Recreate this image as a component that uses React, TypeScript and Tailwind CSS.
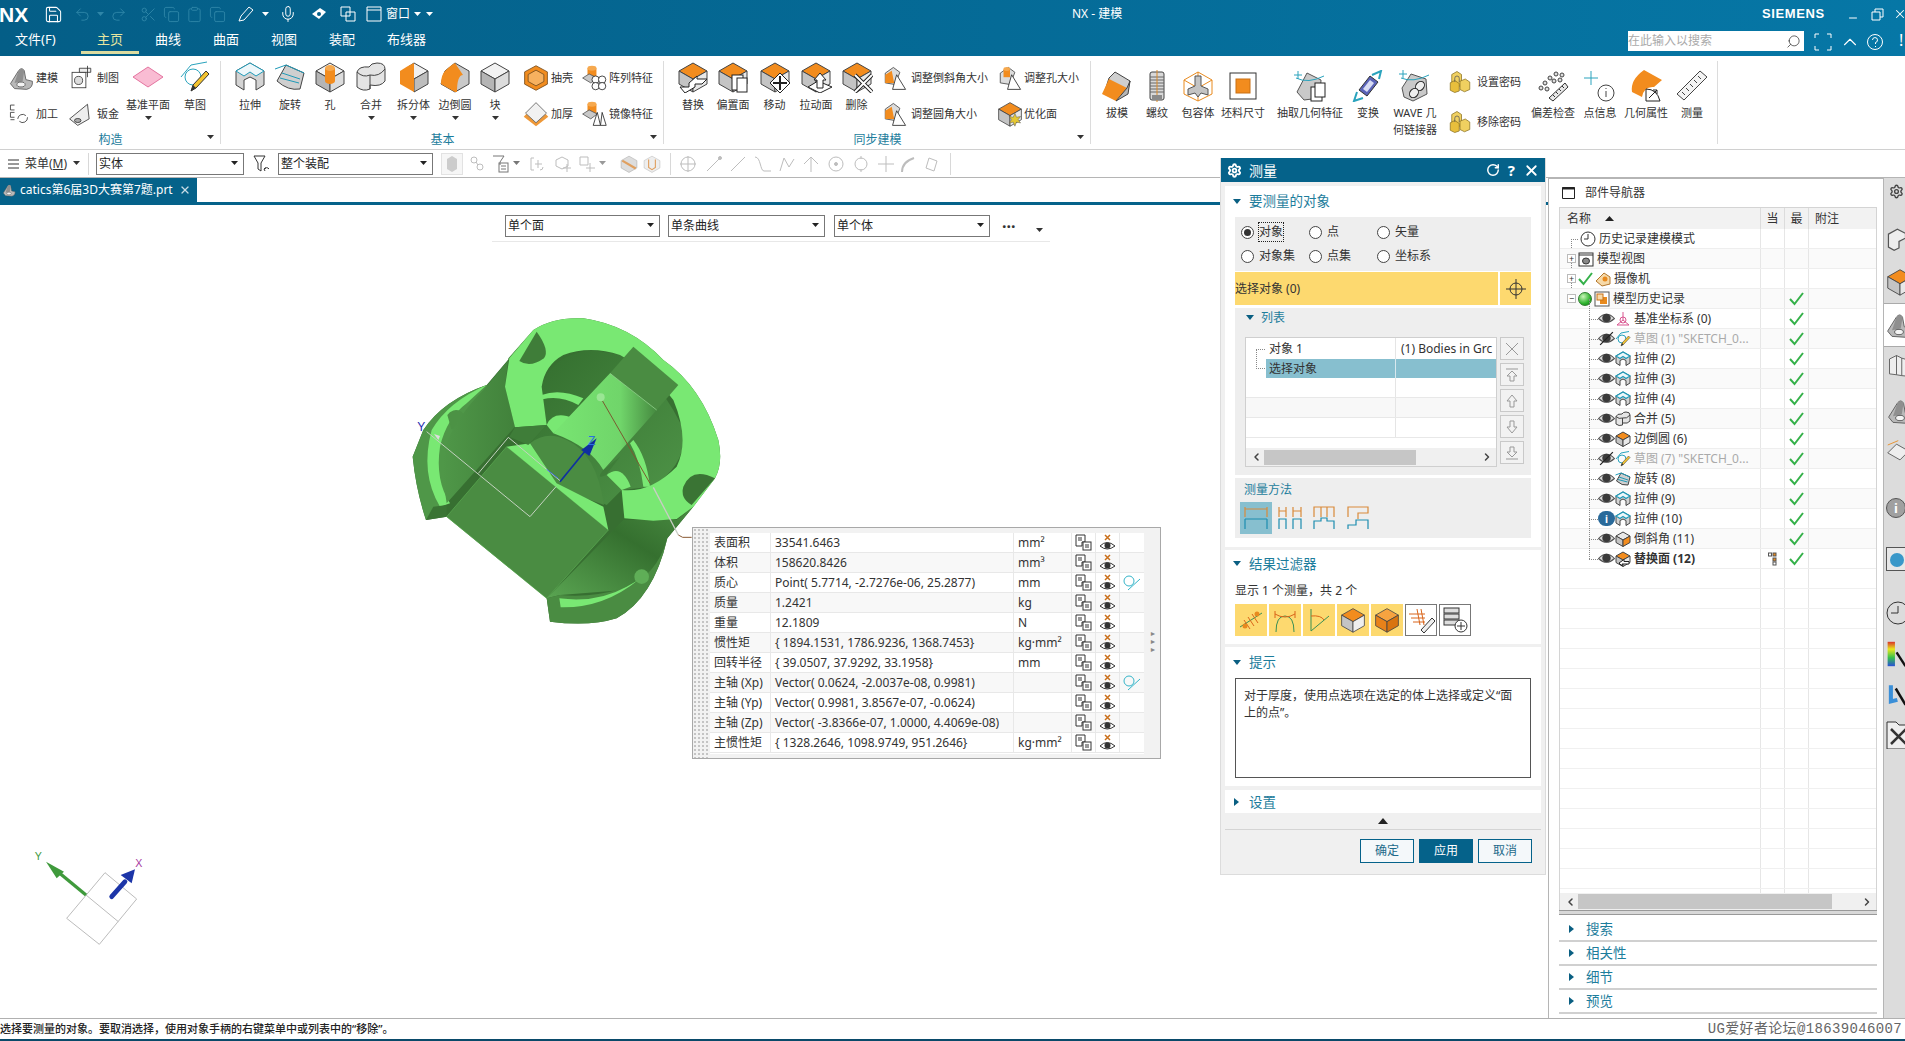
import React from "react";
import { Save, Undo2, Redo2, Scissors, Copy, Clipboard, Mic, Search, ChevronUp, RotateCw, X, Settings, ChevronLeft, ChevronRight, Minus } from "lucide-react";

const FONT = "font-['Noto_Sans','Noto_Sans_CJK_SC',sans-serif]";

const Svg = ({ s = 32, children }: { s?: number; children: React.ReactNode }) => (
  <svg width={s} height={s} viewBox="0 0 32 32" className="shrink-0">
    {children}
  </svg>
);

const Iso = ({ t = "#f2f2f2", l = "#b5b5b5", r = "#dcdcdc", s = 32, children }: { t?: string; l?: string; r?: string; s?: number; children?: React.ReactNode }) => (
  <Svg s={s}>
    <g stroke="#444" strokeWidth={s < 20 ? 2 : 1} strokeLinejoin="round">
      <polygon points="16,2 30,10 16,18 2,10" fill={t} />
      <polygon points="2,10 16,18 16,31 2,23" fill={l} />
      <polygon points="30,10 16,18 16,31 30,23" fill={r} />
    </g>
    {children}
  </Svg>
);

const Tri = ({ open = true }: { open?: boolean }) => (
  <svg width="8" height="8" viewBox="0 0 8 8" className="shrink-0">
    {open ? <polygon points="0,1 8,1 4,6" fill="#0a5f82" /> : <polygon points="1,0 6,4 1,8" fill="#0a5f82" />}
  </svg>
);

const Caret = ({ c = "#333" }: { c?: string }) => (
  <svg width="7" height="5" viewBox="0 0 7 5" className="shrink-0">
    <polygon points="0,0 7,0 3.5,4" fill={c} />
  </svg>
);

const OrangeCube = ({ children, s = 32 }: { children?: React.ReactNode; s?: number }) => (
  <Iso t="#f28c1e" l="#c4c4c4" r="#e8e8e8" s={s}>
    {children}
  </Iso>
);

const Bracket = ({ s = 32 }: { s?: number }) => (
  <Svg s={s}>
    <path d="M3 23 L13 7 Q17 2 20 7 L22 18 L30 20 Q31 28 23 30 L8 29 Z" fill="#b9b9b9" stroke="#555" />
    <path d="M13 7 Q17 2 20 7 L18 20 L8 22Z" fill="#8f8f8f" />
    <ellipse cx="16" cy="24" rx="5" ry="3" fill="#f4f4f4" stroke="#555" />
  </Svg>
);

const PinkPlane = () => (
  <Svg>
    <polygon points="1,16 16,6 31,16 16,26" fill="#f9bcd3" stroke="#e4739f" />
  </Svg>
);

const Sketch = ({ s = 32 }: { s?: number }) => (
  <Svg s={s}>
    <path d="M2 16 L12 4 L28 1" fill="none" stroke="#2aa3bd" strokeWidth={s < 20 ? 2 : 1} />
    <circle cx="14" cy="16" r="8" fill="none" stroke="#2aa3bd" strokeWidth={s < 20 ? 2 : 1} />
    <polygon points="12,30 14,24 27,10 30,13 17,27" fill="#f4c430" stroke="#333" />
    <polygon points="12,30 14,24 17,27" fill="#333" />
  </Svg>
);

const Extrude = ({ s = 32 }: { s?: number }) => (
  <Svg s={s}>
    <path d="M2 10 L16 2 L30 10 L30 24 L22 29 L22 19 L16 16 L10 19 L10 29 L2 24Z" fill="#d4d4d4" stroke="#444" strokeWidth={s < 20 ? 2 : 1} />
    <path d="M2 10 L16 2 L30 10 L22 15 L16 11 L10 15Z" fill="#eef7fa" stroke="#1f9ab8" strokeWidth={s < 20 ? 2.5 : 1} />
  </Svg>
);

const Revolve = ({ s = 32 }: { s?: number }) => (
  <Svg s={s}>
    <path d="M3 20 L12 4 L30 12 L26 28 Q14 30 3 20Z" fill="#cfcfcf" stroke="#444" strokeWidth={s < 20 ? 2 : 1} />
    <path d="M1 8 L12 4 L30 12 M8 12 L26 18 M6 17 L25 22" fill="none" stroke="#1f9ab8" strokeWidth={s < 20 ? 2 : 1} />
  </Svg>
);

const Hole = () => (
  <Iso>
    <rect x="11" y="7" width="10" height="13" fill="#f28c1e" />
    <ellipse cx="16" cy="7" rx="5" ry="3" fill="#f6a94f" />
    <ellipse cx="16" cy="20" rx="5" ry="3" fill="#f28c1e" />
  </Iso>
);

const Unite = ({ s = 32 }: { s?: number }) => (
  <Svg s={s}>
    <path d="M2 11 L2 26 Q8 31 15 28 L15 24 Q26 26 30 20 L30 8 Q30 2 22 2 Q16 2 14 6 Q4 5 2 11Z" fill="#e4e4e4" stroke="#444" strokeWidth={s < 20 ? 2 : 1} />
    <path d="M2 11 Q8 17 15 14 L15 28 M15 14 Q24 16 30 8" fill="none" stroke="#444" strokeWidth={s < 20 ? 2 : 1} />
  </Svg>
);

const SplitBody = () => (
  <Svg>
    <polygon points="16,2 30,10 16,18 10,6" fill="#f0f0f0" stroke="#444" />
    <polygon points="30,10 16,18 16,31 30,23" fill="#bdbdbd" stroke="#444" />
    <polygon points="10,5 16,2 16,18 16,31 2,23 2,10" fill="#f28c1e" />
  </Svg>
);

const EdgeBlend = () => (
  <Svg>
    <polygon points="16,2 30,10 30,23 16,31 2,23 6,10" fill="#c9c9c9" stroke="#444" />
    <path d="M6 10 Q12 4 16 2 L24 14 Q18 14 18 31 L16 31 L2 23 Q2 14 6 10Z" fill="#f28c1e" />
  </Svg>
);

const Shell = () => (
  <Svg s={28}>
    <polygon points="16,2 29,9 29,23 16,30 3,23 3,9" fill="#f28c1e" stroke="#7a5020" />
    <polygon points="16,7 25,12 25,20 16,25 7,20 7,12" fill="#f7b15f" stroke="#7a5020" />
  </Svg>
);

const Thicken = () => (
  <Svg s={28}>
    <polygon points="2,19 16,4 30,19 16,30" fill="#ee9838" />
    <polygon points="4,15 16,3 28,15 16,26" fill="#f1f1f1" stroke="#666" />
  </Svg>
);

const PatternIcon = ({ mirror = false }: { mirror?: boolean }) => (
  <Svg s={26}>
    <rect x="8" y="4" width="11" height="13" fill="#f28c1e" />
    <ellipse cx="13.5" cy="4" rx="5.5" ry="3" fill="#f6a94f" />
    <polygon points="2,16 10,11 20,16 12,22" fill="#c8c8c8" stroke="#555" />
    {mirror ? (
      <>
        <polygon points="15,30 20,14 24,30" fill="#fff" stroke="#222" />
        <polygon points="24,30 26,14 31,30" fill="#fff" stroke="#222" />
      </>
    ) : (
      <g fill="#fff" stroke="#222">
        <circle cx="18" cy="18" r="4.5" />
        <circle cx="26" cy="18" r="4.5" />
        <circle cx="18" cy="26" r="4.5" />
        <circle cx="26" cy="26" r="4.5" />
      </g>
    )}
  </Svg>
);

const ArrowOver = ({ d }: { d: string }) => <path d={d} fill="#fff" stroke="#222" strokeWidth="1" />;

const TriOver = ({ top = "#f28c1e", ball = false }: { top?: string; ball?: boolean }) => (
  <Svg s={26}>
    <polygon points="4,10 14,3 22,9 16,24 4,22" fill="#dcdcdc" stroke="#444" />
    {ball ? (
      <>
        <rect x="8" y="5" width="8" height="10" fill={top} />
        <ellipse cx="12" cy="5" rx="4" ry="2.4" fill="#f6a94f" />
      </>
    ) : (
      <polygon points="4,12 12,7 15,22 4,22" fill={top} />
    )}
    <polygon points="18,12 29,30 13,30" fill="#fff" stroke="#222" />
  </Svg>
);

const Draft = () => (
  <Svg>
    <polygon points="14,2 29,11 26,23 3,24 8,8" fill="#cfcfcf" stroke="#444" />
    <polygon points="8,9 26,18 15,31 1,24" fill="#f28c1e" />
    <polygon points="26,18 29,11 27,24 15,31" fill="#b5b5b5" stroke="#444" />
  </Svg>
);

const Thread = () => (
  <Svg>
    <rect x="9" y="2" width="14" height="28" rx="2" fill="#d9d9d9" stroke="#444" />
    <path d="M9 7h14M9 10h14M9 13h14M9 16h14M9 19h14M9 22h14" stroke="#666" />
    <path d="M16 0v32" stroke="#d98a2a" />
    <rect x="11" y="25" width="10" height="5" fill="#8a8a8a" />
  </Svg>
);

const Wrap = () => (
  <Svg>
    <polygon points="16,2 30,10 30,24 16,31 2,24 2,10" fill="none" stroke="#e88a1e" />
    <path d="M2 10 L16 18 L30 10 M16 18 V31 M16 2 V18" stroke="#e88a1e" fill="none" />
    <path d="M13 6h6v10l7 3v6l-7-2-3 4-3-4-7 2v-6l7-3z" fill="#c4c4c4" stroke="#555" />
  </Svg>
);

const Blank = () => (
  <Svg>
    <rect x="3" y="3" width="26" height="26" fill="#fff" stroke="#333" />
    <rect x="9" y="9" width="14" height="14" fill="#f28c1e" stroke="#c97014" />
  </Svg>
);

const ExtractGeo = () => (
  <Svg>
    <polygon points="3,22 13,3 27,10 26,28 10,30" fill="#c9c9c9" stroke="#555" />
    <path d="M2 8 Q14 14 30 6" fill="none" stroke="#2aa3bd" />
    <path d="M4 1v8M0 5h8" stroke="#2aa3bd" />
    <rect x="17" y="17" width="11" height="14" fill="#fff" stroke="#222" />
    <rect x="21" y="13" width="10" height="14" fill="#fff" stroke="#222" />
  </Svg>
);

const Transform = () => (
  <Svg>
    <polygon points="7,20 18,6 26,12 15,26" fill="#5a63b8" stroke="#333" />
    <polygon points="11,19 18,10 22,13 15,22" fill="#d8dcf4" />
    <path d="M20 5 L29 1 L27 9 M5 22 L2 31 L11 28" fill="none" stroke="#2aa3bd" strokeWidth="2" />
  </Svg>
);

const Wave = () => (
  <Svg>
    <polygon points="3,18 12,4 27,9 28,24 14,31 5,27" fill="#c9c9c9" stroke="#555" />
    <path d="M2 8 Q14 13 30 5" fill="none" stroke="#2aa3bd" />
    <path d="M4 0v8M0 4h8" stroke="#2aa3bd" />
    <ellipse cx="21" cy="16" rx="4" ry="5" fill="#eee" stroke="#222" transform="rotate(40 21 16)" />
    <ellipse cx="15" cy="23" rx="4" ry="5" fill="#eee" stroke="#222" transform="rotate(40 15 23)" />
  </Svg>
);

const Lock = () => (
  <Svg s={24}>
    <polygon points="5,6 12,2 18,6 18,20 11,24 5,20" fill="#f0d060" stroke="#8a7020" />
    <polygon points="16,15 23,12 29,16 29,26 22,29 16,26" fill="#f0d060" stroke="#8a7020" />
    <polygon points="3,17 9,14 15,18 15,28 9,30 3,27" fill="#e8bf3c" stroke="#8a7020" />
    <path d="M9 16 V11 a3 3 0 0 1 6 0 V16" fill="none" stroke="#555" />
  </Svg>
);

const Deviation = () => (
  <Svg>
    <g fill="#ddd" stroke="#444">
      <circle cx="8" cy="13" r="2" />
      <circle cx="13" cy="8" r="2" />
      <circle cx="19" cy="4" r="2" />
      <circle cx="25" cy="5" r="2" />
      <circle cx="4" cy="18" r="2" />
      <circle cx="10" cy="19" r="2" />
      <circle cx="17" cy="11" r="2" />
      <circle cx="23" cy="10" r="2" />
    </g>
    <polygon points="12,28 28,13 31,17 16,31" fill="#e8e8e8" stroke="#333" />
    <path d="M16 25l2 2M19 22l2 2M22 19l2 2M25 16l2 2" stroke="#333" />
  </Svg>
);

const PointInfo = () => (
  <Svg>
    <path d="M7 1v14M0 8h14" stroke="#2aa3bd" />
    <circle cx="22" cy="23" r="8" fill="#fff" stroke="#444" />
    <path d="M22 21v6M22 18v1" stroke="#444" />
  </Svg>
);

const GeoProp = () => (
  <Svg>
    <path d="M14 0 L32 10 L24 17 Q14 16 12 27 L2 22 Q0 10 14 0Z" fill="#f28c1e" />
    <path d="M16 31 L16 19 Q27 19 30 31Z" fill="#fff" stroke="#222" />
    <path d="M19 28 L27 20 M23 20h4v4" fill="none" stroke="#222" />
  </Svg>
);

const Ruler = () => (
  <Svg>
    <polygon points="1,24 24,1 31,7 8,30" fill="#f4f4f4" stroke="#444" />
    <path d="M6 22l3 3M10 18l3 3M14 14l3 3M18 10l3 3M22 6l3 3" stroke="#444" />
  </Svg>
);

const RibbonIcons: Record<string, React.ReactNode> = {
  replace: (
    <OrangeCube>
      <ArrowOver d="M12 22 L20 15 L20 18 L30 18 L25 23 L18 23 L18 26 L8 32 L3 26 L12 26Z" />
    </OrangeCube>
  ),
  offset: (
    <OrangeCube>
      <rect x="15" y="14" width="11" height="15" fill="#fff" stroke="#222" />
      <rect x="20" y="17" width="10" height="14" fill="#fff" stroke="#222" />
    </OrangeCube>
  ),
  move: (
    <OrangeCube>
      <polygon points="21,12 31,22 21,32 11,22" fill="#fff" stroke="#222" />
      <path d="M21 15v14M14 22h14" stroke="#222" strokeWidth="2" />
    </OrangeCube>
  ),
  pull: (
    <OrangeCube>
      <polygon points="8,26 18,20 32,26 20,32" fill="#fff" stroke="#222" />
      <ArrowOver d="M20 12 L26 19 L23 19 L23 27 L17 27 L17 19 L14 19Z" />
    </OrangeCube>
  ),
  del: (
    <OrangeCube>
      <path d="M14 14 L31 31 M31 14 L14 31" stroke="#222" strokeWidth="4" />
      <path d="M14 14 L31 31 M31 14 L14 31" stroke="#fff" strokeWidth="2" />
    </OrangeCube>
  ),
  optimize: (
    <OrangeCube s={26}>
      <path d="M22 15l2 5 5-1-3 4 3 4-5-1-2 5-2-5-5 1 3-4-3-4 5 1z" fill="#e6c832" stroke="#555" strokeWidth="0.6" />
    </OrangeCube>
  ),
};

const Big = ({ w, label, label2, caret, children, low }: { w: string; label: string; label2?: string; caret?: boolean; children: React.ReactNode; low?: boolean }) => (
  <div className={`${w} flex shrink-0 flex-col items-center ${low ? "pt-[14px]" : "pt-[5px]"}`}>
    <div className="flex h-[32px] items-center justify-center">{children}</div>
    <div className={`whitespace-nowrap text-center text-[11px] leading-[16px] text-[#333] ${low ? "mt-[3px]" : "mt-[4px]"}`}>{label}</div>
    {label2 && <div className="mt-[1px] whitespace-nowrap text-center text-[11px] leading-[16px] text-[#333]">{label2}</div>}
    {caret && (
      <div className="mt-[3px]">
        <Caret />
      </div>
    )}
  </div>
);

const Small = ({ icon, label, w, gap = "gap-[3px]" }: { icon: React.ReactNode; label: string; w?: string; gap?: string }) => (
  <div className={`flex h-[36px] items-center ${gap} ${w ?? ""}`}>
    {icon}
    <span className="whitespace-nowrap text-[11px] text-[#333]">{label}</span>
  </div>
);

const Group = ({ title, w, children, pl, caret = true }: { title?: string; w: string; children: React.ReactNode; pl: string; caret?: boolean }) => (
  <div className={`${w} relative flex h-full shrink-0 flex-col`}>
    <div className={`flex h-[76px] ${pl}`}>{children}</div>
    {title && <div className="mt-[1px] text-center text-[12px] leading-[14px] text-[#1d7d9c]">{title}</div>}
    {caret && (
      <div className="absolute bottom-[9px] right-[7px]">
        <Caret />
      </div>
    )}
    <div className="absolute bottom-[5px] right-0 top-[5px] w-px bg-[#dcdcdc]" />
  </div>
);

const Header = () => (
  <div className="flex h-[56px] shrink-0 flex-col bg-linear-to-r from-[#045e87] to-[#0677a6] text-white">
    <div className="relative flex h-[28px] items-center">
      <span className="ml-[-1px] w-[38px] font-['Liberation_Sans'] text-[21px] font-bold leading-none">NX</span>
      <Save size={19} strokeWidth={1.3} className="ml-[7px]" />
      <div className="ml-[11px] flex items-center gap-[6px] text-[#2f86a8]">
        <Undo2 size={17} strokeWidth={1.3} />
        <Caret c="#2f86a8" />
        <Redo2 size={17} strokeWidth={1.3} />
        <Scissors size={17} strokeWidth={1.3} className="ml-[7px]" />
        <Copy size={17} strokeWidth={1.3} />
        <Clipboard size={17} strokeWidth={1.3} />
        <Copy size={17} strokeWidth={1.3} />
      </div>
      <svg width="18" height="18" viewBox="0 0 18 18" className="ml-[11px]">
        <path d="M2 16 L4 11 L12 2 L16 5 L7 15Z" fill="none" stroke="#fff" />
      </svg>
      <div className="ml-[7px]">
        <Caret c="#fff" />
      </div>
      <Mic size={18} strokeWidth={1.3} className="ml-[10px]" />
      <svg width="18" height="18" viewBox="0 0 18 18" className="ml-[13px]">
        <path d="M2 9 L10 3 L16 7 L9 14Z" fill="#fff" />
        <circle cx="9" cy="9" r="2" fill="#045e87" />
      </svg>
      <svg width="18" height="18" viewBox="0 0 18 18" className="ml-[11px]">
        <path d="M2 2h9v9H2zM7 7h9v9H7z" fill="none" stroke="#fff" />
      </svg>
      <svg width="18" height="18" viewBox="0 0 18 18" className="ml-[8px]">
        <path d="M2 2h14v14H2zM2 5h14" fill="none" stroke="#fff" />
      </svg>
      <span className="ml-[3px] text-[12px]">窗口</span>
      <div className="ml-[4px]">
        <Caret c="#fff" />
      </div>
      <div className="ml-[5px]">
        <Caret c="#fff" />
      </div>
      <span className="absolute left-[1072px] text-[12px]">NX - 建模</span>
      <span className="absolute left-[1762px] font-['Liberation_Sans'] text-[13px] font-bold tracking-[0.6px]">SIEMENS</span>
      <Minus size={12} strokeWidth={2} className="absolute left-[1847px] top-[12px]" />
      <svg width="13" height="13" viewBox="0 0 13 13" className="absolute left-[1871px] top-[8px]">
        <path d="M1 4h8v8H1zM4 4V1h8v8H9" fill="none" stroke="#fff" />
      </svg>
      <X size={14} strokeWidth={1.8} className="absolute left-[1893px] top-[7px]" />
    </div>
    <div className="relative flex h-[28px] items-start text-[13px] leading-[22px]">
      <span className="ml-[15px] w-[66px]">文件(F)</span>
      <span className="flex h-[26px] w-[58px] justify-center border-b-[3px] border-[#dcdca0] text-[#e6e6a0]">主页</span>
      <span className="ml-[16px] w-[58px]">曲线</span>
      <span className="w-[58px]">曲面</span>
      <span className="w-[58px]">视图</span>
      <span className="w-[58px]">装配</span>
      <span>布线器</span>
      <div className="absolute left-[1628px] top-[3px] flex h-[20px] w-[176px] items-center justify-between bg-white pr-[3px]">
        <span className="text-[12px] leading-none text-[#aaa]">在此输入以搜索</span>
        <Search size={15} strokeWidth={1.2} className="scale-x-[-1] text-[#333]" />
      </div>
      <svg width="18" height="18" viewBox="0 0 18 18" className="absolute left-[1814px] top-[5px]">
        <path d="M1 5V1h4M13 1h4v4M17 13v4h-4M5 17H1v-4" fill="none" stroke="#fff" />
      </svg>
      <ChevronUp size={22} strokeWidth={1.2} className="absolute left-[1839px] top-[3px]" />
      <svg width="18" height="18" viewBox="0 0 18 18" className="absolute left-[1866px] top-[5px]">
        <circle cx="9" cy="9" r="7.5" fill="none" stroke="#fff" />
        <path d="M6.5 7a2.5 2.5 0 1 1 3 2.5V11M9.500 13v1" fill="none" stroke="#fff" />
      </svg>
      <span className="absolute left-[1899px] top-[1px] text-[16px] leading-[22px]">!</span>
    </div>
  </div>
);

const Ribbon = () => (
  <div className="flex h-[94px] shrink-0 border-b border-[#d0d0d0] bg-white">
    <Group title="构造" w="w-[221px]" pl="pl-[8px]">
      <div className="w-[60px] shrink-0 pt-[4px]">
        <Small icon={<Bracket s={26} />} label="建模" gap="gap-[2px]" />
        <Small
          icon={
            <Svg s={26}>
              <path d="M8 5H3v6h5M8 14H3v6h5M8 23H3" fill="none" stroke="#333" />
              <path d="M12 22a6 6 0 0 1 10-4M24 20a6 6 0 0 1-10 5" fill="none" stroke="#333" />
            </Svg>
          }
          label="加工"
          gap="gap-[2px]"
        />
      </div>
      <div className="w-[56px] shrink-0 pt-[4px]">
        <Small
          icon={
            <Svg s={26}>
              <rect x="5" y="9" width="17" height="19" fill="#fff" stroke="#333" />
              <circle cx="13" cy="19" r="5" fill="#ddd" stroke="#333" />
              <path d="M14 4h14v5H14z" fill="#eee" stroke="#333" />
              <path d="M24 1v14" stroke="#333" />
            </Svg>
          }
          label="制图"
        />
        <Small
          icon={
            <Svg s={26}>
              <path d="M2 22 L24 4 L26 22 L12 30 Z" fill="#eee" stroke="#333" />
              <ellipse cx="12" cy="24" rx="4" ry="2.5" fill="#aaa" stroke="#333" />
            </Svg>
          }
          label="钣金"
        />
      </div>
      <Big w="w-[48px]" label="基准平面" caret>
        <PinkPlane />
      </Big>
      <Big w="w-[46px]" label="草图">
        <Sketch />
      </Big>
    </Group>
    <Group title="基本" w="w-[443px]" pl="pl-[9px]">
      <Big w="w-[40px]" label="拉伸">
        <Extrude />
      </Big>
      <Big w="w-[40px]" label="旋转">
        <Revolve />
      </Big>
      <Big w="w-[40px]" label="孔">
        <Hole />
      </Big>
      <Big w="w-[42px]" label="合并" caret>
        <Unite />
      </Big>
      <Big w="w-[43px]" label="拆分体" caret>
        <SplitBody />
      </Big>
      <Big w="w-[40px]" label="边倒圆" caret>
        <EdgeBlend />
      </Big>
      <Big w="w-[40px]" label="块" caret>
        <Iso />
      </Big>
      <div className="ml-[7px] w-[56px] shrink-0 pt-[4px]">
        <Small icon={<Shell />} label="抽壳" gap="gap-[1px]" />
        <Small icon={<Thicken />} label="加厚" gap="gap-[1px]" />
      </div>
      <div className="ml-[3px] shrink-0 pt-[4px]">
        <Small icon={<PatternIcon />} label="阵列特征" gap="gap-[2px]" />
        <Small icon={<PatternIcon mirror />} label="镜像特征" gap="gap-[2px]" />
      </div>
    </Group>
    <Group title="同步建模" w="w-[427px]" pl="pl-[9px]">
      <Big w="w-[40px]" label="替换">{RibbonIcons.replace}</Big>
      <Big w="w-[40px]" label="偏置面">{RibbonIcons.offset}</Big>
      <Big w="w-[43px]" label="移动">{RibbonIcons.move}</Big>
      <Big w="w-[40px]" label="拉动面">{RibbonIcons.pull}</Big>
      <Big w="w-[41px]" label="删除">{RibbonIcons.del}</Big>
      <div className="ml-[5px] w-[115px] shrink-0 pt-[4px]">
        <Small icon={<TriOver />} label="调整倒斜角大小" />
        <Small icon={<TriOver />} label="调整圆角大小" />
      </div>
      <div className="shrink-0 pt-[4px]">
        <Small icon={<TriOver ball />} label="调整孔大小" gap="gap-[1px]" />
        <Small icon={RibbonIcons.optimize} label="优化面" gap="gap-[1px]" />
      </div>
    </Group>
    <Group w="w-[627px]" pl="pl-[6px]" caret={false}>
      <Big low w="w-[40px]" label="拔模">
        <Draft />
      </Big>
      <Big low w="w-[40px]" label="螺纹">
        <Thread />
      </Big>
      <Big low w="w-[42px]" label="包容体">
        <Wrap />
      </Big>
      <Big low w="w-[48px]" label="坯料尺寸">
        <Blank />
      </Big>
      <Big low w="w-[86px]" label="抽取几何特征">
        <ExtractGeo />
      </Big>
      <Big low w="w-[30px]" label="变换">
        <Transform />
      </Big>
      <Big low w="w-[64px]" label="WAVE 几" label2="何链接器">
        <Wave />
      </Big>
      <div className="ml-[1px] w-[81px] shrink-0 pt-[8px]">
        <div className="mb-[4px]">
          <Small icon={<Lock />} label="设置密码" gap="gap-[5px]" />
        </div>
        <Small icon={<Lock />} label="移除密码" gap="gap-[5px]" />
      </div>
      <Big low w="w-[48px]" label="偏差检查">
        <Deviation />
      </Big>
      <Big low w="w-[46px]" label="点信息">
        <PointInfo />
      </Big>
      <Big low w="w-[46px]" label="几何属性">
        <GeoProp />
      </Big>
      <Big low w="w-[46px]" label="测量">
        <Ruler />
      </Big>
    </Group>
  </div>
);

const Combo = ({ w, text, h = "h-[22px]" }: { w: string; text: string; h?: string }) => (
  <div className={`${w} ${h} flex shrink-0 items-center justify-between border border-[#777] bg-white pl-[2px] pr-[5px] text-[12px] text-[#222]`}>
    <span>{text}</span>
    <Caret c="#222" />
  </div>
);

const Dim = ({ children, ml }: { children: React.ReactNode; ml: string }) => (
  <svg width="18" height="18" viewBox="0 0 18 18" className={`${ml} shrink-0`} fill="none" stroke="#bdbdbd">
    {children}
  </svg>
);

const Toolbar = () => (
  <div className="flex h-[28px] shrink-0 items-center border-b border-[#b5b5b5] bg-white">
    <svg width="12" height="10" viewBox="0 0 12 10" className="ml-[8px]">
      <path d="M0 1h11M0 5h11M0 9h11" stroke="#333" />
    </svg>
    <span className="ml-[5px] text-[12px] text-[#333]">
      菜单(<span className="underline">M</span>)
    </span>
    <div className="ml-[6px]">
      <Caret />
    </div>
    <div className="ml-[8px] h-[22px] w-px bg-[#d8d8d8]" />
    <div className="ml-[7px]">
      <Combo w="w-[148px]" text="实体" />
    </div>
    <svg width="18" height="20" viewBox="0 0 18 20" className="ml-[9px]">
      <path d="M1 2h11L8 9v8L5 15V9z" fill="#fff" stroke="#333" />
      <path d="M11 15a3 3 0 0 1 5 0M11 15l2-1M11 15l1 2" fill="none" stroke="#333" />
    </svg>
    <div className="ml-[7px]">
      <Combo w="w-[155px]" text="整个装配" />
    </div>
    <div className="ml-[8px] flex h-[22px] w-[22px] items-center justify-center border border-[#e2e2e2] bg-[#f6f6f6]">
      <svg width="16" height="18" viewBox="0 0 16 18">
        <path d="M3 4l5-3 5 3v10l-5 3-5-3z" fill="#ccc" />
      </svg>
    </div>
    <Dim ml="ml-[5px]">
      <circle cx="6" cy="5" r="3" />
      <circle cx="12" cy="12" r="3" />
      <path d="M8 7l2 3" />
    </Dim>
    <svg width="18" height="20" viewBox="0 0 18 20" fill="none" stroke="#777" className="ml-[6px]">
      <path d="M1 2h11L8 8v3" />
      <rect x="7" y="9" width="9" height="9" />
      <path d="M9 12h5M9 15h5" />
    </svg>
    <div className="ml-[3px]">
      <Caret c="#777" />
    </div>
    <Dim ml="ml-[9px]">
      <path d="M2 3v12M2 3h3M2 15h3M9 5v8M6 9h7M14 12a3 3 0 0 1-3 3" />
    </Dim>
    <Dim ml="ml-[7px]">
      <path d="M2 5l6-3 6 3v6l-6 3-6-3z" />
      <path d="M13 9v8M9 13h8" />
    </Dim>
    <Dim ml="ml-[6px]">
      <path d="M2 2h8v8H2zM12 8v9M8 13h9" />
    </Dim>
    <div className="ml-[3px]">
      <Caret c="#999" />
    </div>
    <svg width="18" height="18" viewBox="0 0 32 32" className="ml-[14px]">
      <polygon points="16,2 30,10 30,23 16,31 2,23 2,10" fill="#ddd" stroke="#aaa" />
      <path d="M4 10 L28 24" stroke="#e0a060" strokeWidth="4" />
    </svg>
    <svg width="18" height="18" viewBox="0 0 32 32" className="ml-[5px]">
      <polygon points="16,2 30,10 30,23 16,31 2,23 2,10" fill="#eee" stroke="#bbb" />
      <path d="M10 8v14l6 4 6-4V8" fill="none" stroke="#e0a060" strokeWidth="2" />
    </svg>
    <div className="ml-[9px] h-[22px] w-px bg-[#d8d8d8]" />
    <Dim ml="ml-[8px]">
      <circle cx="9" cy="9" r="7" />
      <path d="M9 1v16M1 9h16" />
    </Dim>
    <Dim ml="ml-[8px]">
      <path d="M2 16L15 3" />
      <circle cx="15" cy="3" r="1.500" fill="#bdbdbd" />
    </Dim>
    <Dim ml="ml-[6px]">
      <path d="M2 16L16 2" />
    </Dim>
    <Dim ml="ml-[7px]">
      <path d="M1 2c6 0 5 14 9 14h7" />
    </Dim>
    <Dim ml="ml-[6px]">
      <path d="M2 16L6 3l5 9 5-8" />
    </Dim>
    <Dim ml="ml-[6px]">
      <path d="M9 17V2M2 9l7-7 7 7" />
    </Dim>
    <Dim ml="ml-[7px]">
      <circle cx="9" cy="9" r="7" />
      <circle cx="9" cy="9" r="1.500" fill="#bdbdbd" />
    </Dim>
    <Dim ml="ml-[7px]">
      <circle cx="9" cy="9" r="6" />
      <path d="M9 1v3M9 14v3" />
    </Dim>
    <Dim ml="ml-[7px]">
      <path d="M9 1v16M1 9h16" />
    </Dim>
    <Dim ml="ml-[5px]">
      <path d="M2 17c0-8 6-12 12-14" strokeWidth="2" />
    </Dim>
    <Dim ml="ml-[5px]">
      <path d="M6 3l8 3-3 10-8-3z" />
    </Dim>
    <div className="ml-[9px] h-[22px] w-px bg-[#d8d8d8]" />
  </div>
);

const Model = () => (
  <svg width="350" height="350" viewBox="0 0 1050 1050" className="absolute left-[390px] top-[85px]">
    <defs>
      <linearGradient id="gTab" x1="0" y1="0" x2="1" y2="0">
        <stop offset="0" stopColor="#78e572" />
        <stop offset="0.65" stopColor="#70d56a" />
        <stop offset="1" stopColor="#468a40" />
      </linearGradient>
      <linearGradient id="gSide" x1="0" y1="0" x2="1" y2="0">
        <stop offset="0" stopColor="#4f9748" />
        <stop offset="1" stopColor="#3e7c38" />
      </linearGradient>
      <linearGradient id="gLow" x1="0" y1="1" x2="1" y2="0">
        <stop offset="0" stopColor="#5aa552" />
        <stop offset="0.6" stopColor="#35702f" />
        <stop offset="1" stopColor="#4a8c42" />
      </linearGradient>
      <linearGradient id="gHole" x1="0" y1="0" x2="1" y2="1">
        <stop offset="0" stopColor="#336d2e" />
        <stop offset="1" stopColor="#4f9548" />
      </linearGradient>
    </defs>
    <path
      d="M68 500 L100 420 Q160 330 290 285 L430 120 Q490 80 580 85 Q720 105 820 210 Q935 290 985 450 Q1000 520 975 565 L910 650 L832 745 Q790 925 680 985 Q600 1010 480 995 L470 925 L170 680 L108 690 Q78 600 68 500Z"
      fill="#376f31"
    />
    <path d="M68 500 L100 420 Q160 330 290 285 L300 330 L170 640 L108 690 Q78 600 68 500Z" fill="#4f9748" />
    <path d="M125 420 Q175 335 290 285 L230 340 Q170 385 150 470 Q135 570 180 640 L150 650 Q90 550 125 420Z" fill="#79e873" />
    <path d="M172 375 a30 30 0 1 1 12 42Z" fill="#4c9245" />
    <path d="M108 690 L170 680 L170 645 L130 650Z" fill="#3a7434" />
    <path d="M430 120 L355 205 L345 290 L375 410 L170 640 L158 560 L165 470 Q200 380 280 300Z" fill="url(#gSide)" />
    <path d="M170 680 L350 470 L655 720 L470 925 Z" fill="#4a8c42" stroke="#5eae55" strokeWidth="2" />
    <path d="M470 925 L700 690 L860 690 L910 650 L832 745 Q800 860 700 900 L510 915 Z" fill="url(#gLow)" />
    <path d="M470 925 L480 995 Q600 1010 680 985 Q790 925 832 745 Q800 860 700 895 Q600 925 510 915Z" fill="#4a8c42" />
    <path d="M508 925 Q620 940 710 890 L745 870 Q640 955 512 952Z" fill="#79e873" />
    <circle cx="755" cy="860" r="22" fill="#5fae57" />
    <path d="M455 290 Q480 200 600 180 L700 195 Q820 280 885 430 Q880 540 780 590 L695 600 L650 645 L500 575 L420 460 L470 405Z" fill="url(#gHole)" />
    <path d="M455 315 Q510 295 580 325 L565 345 Q510 315 458 328Z" fill="#79e873" />
    <path d="M470 405 Q490 360 550 385 L490 430Z" fill="#79e873" />
    <path d="M420 460 Q470 420 530 450 Q620 490 642 645 Q540 610 500 580Z" fill="#4a8c42" />
    <path d="M350 470 L420 460 L500 580 L640 650 L655 720Z" fill="#79e873" />
    <path d="M650 555 Q695 520 722 590 L695 600 Z" fill="#79e873" />
    <path d="M730 450 Q770 500 780 590 L760 590 Q750 510 720 460Z" fill="#79e873" />
    <path
      d="M430 120 Q490 80 580 85 Q720 105 820 210 Q935 290 985 450 Q1000 520 975 565 L910 650 L860 687 L790 692 L703 685 L695 600 Q780 610 860 530 Q900 450 850 330 Q790 250 690 195 Q600 165 520 195 Q465 225 455 290 L470 405 L375 412 L345 290 L358 205 Z"
      fill="#79e873"
    />
    <path d="M440 125 Q480 180 462 205 Q420 235 388 213 Z" fill="#3f7d39" />
    <path d="M880 590 Q905 530 975 565 L905 645 Q870 625 880 590Z" fill="#3a7434" />
    <path d="M375 412 L470 405 L415 465 L358 440Z" fill="#3f7d39" />
    <path d="M490 430 L660 250 L800 360 L640 540 Q600 470 490 430Z" fill="url(#gTab)" />
    <path d="M660 250 L730 170 L865 285 L800 360Z" fill="#4a8c42" />
    <path d="M660 250 L800 360" stroke="#9fe09a" strokeWidth="2" />
    <path d="M640 540 Q615 570 648 555 L690 500Z" fill="#3f7d39" />
    <path d="M110 425 L420 680 L498 590 M265 550 L355 442 L510 572" fill="none" stroke="#c4d2c0" strokeWidth="3" />
    <path d="M790 592 L865 735" stroke="#c9cdc5" strokeWidth="4" />
    <path d="M637 332 L780 580" stroke="#7b5a30" strokeWidth="3" />
    <path d="M865 735 L878 742 L905 742" stroke="#8a5a34" strokeWidth="3" fill="none" />
    <circle cx="632" cy="322" r="12" fill="#9ae694" />
    <path d="M510 575 L600 465" stroke="#0f2fa0" strokeWidth="5" />
    <polygon points="620,445 598,498 574,480" fill="#0f2fa0" />
    <path d="M470 538 L505 565" stroke="#3b70d8" strokeWidth="3" />
    <polygon points="145,450 132,432 150,438" fill="#ddd" />
    <text x="82" y="422" fontSize="36" fill="#1d2db0" fontFamily="Liberation Sans">Y</text>
    <text x="594" y="466" fontSize="36" fill="#2a70e0" fontFamily="Liberation Sans">Z</text>
  </svg>
);

const eyeCross = (
  <svg width="17" height="19" viewBox="0 0 17 19" className="shrink-0">
    <path d="M6 2l5 5M11 2L6 7" stroke="#c96f1a" strokeWidth="1.500" />
    <path d="M1 13 Q8 6 16 13 Q8 19 1 13Z" fill="#fff" stroke="#333" />
    <circle cx="8.500" cy="12.500" r="3" fill="#333" />
  </svg>
);

const Pmi = () => (
  <svg width="17" height="17" viewBox="0 0 17 17" className="shrink-0">
    <path d="M1 1h9v7h-3v4H1z" fill="#fff" stroke="#333" />
    <path d="M3 4h4M3 6h4" stroke="#333" />
    <rect x="8" y="8" width="8" height="8" fill="#fff" stroke="#333" />
    <path d="M10 11h4M10 13h4" stroke="#333" />
  </svg>
);

const Annot = () => (
  <svg width="18" height="16" viewBox="0 0 18 16" className="shrink-0">
    <circle cx="6" cy="6" r="5" fill="none" stroke="#35b5c9" />
    <path d="M5 15L17 4" stroke="#35b5c9" />
  </svg>
);

const results = [
  ["表面积", "33541.6463", "mm²"],
  ["体积", "158620.8426", "mm³"],
  ["质心", "Point( 5.7714, -2.7276e-06, 25.2877)", "mm", "a"],
  ["质量", "1.2421", "kg"],
  ["重量", "12.1809", "N"],
  ["惯性矩", "{ 1894.1531, 1786.9236, 1368.7453}", "kg·mm²"],
  ["回转半径", "{ 39.0507, 37.9292, 33.1958}", "mm"],
  ["主轴 (Xp)", "Vector( 0.0624, -2.0037e-08, 0.9981)", "", "a"],
  ["主轴 (Yp)", "Vector( 0.9981, 3.8567e-07, -0.0624)", ""],
  ["主轴 (Zp)", "Vector( -3.8366e-07, 1.0000, 4.4069e-08)", ""],
  ["主惯性矩", "{ 1328.2646, 1098.9749, 951.2646}", "kg·mm²"],
];

const ResultPanel = () => (
  <div className="absolute left-[692px] top-[322px] flex h-[232px] w-[469px] border border-[#a8a8a8] bg-[#f2f2f2]">
    <div className="w-[17px] shrink-0 bg-[radial-gradient(#c4c4c4_1.2px,transparent_1.3px)] bg-[length:4px_4px]" />
    <div className="mt-[5px] h-[221px] w-[434px] bg-white">
      {results.map((r, i) => (
        <div key={r[0]} className={`flex h-[20px] items-center border-b border-[#e8e8e8] text-[12px] text-[#333] ${i % 2 ? "bg-[#f8f8f8]" : "bg-white"}`}>
          <div className="w-[60px] shrink-0 whitespace-nowrap pl-[4px] text-[12px]">{r[0]}</div>
          <div className="h-full w-[243px] shrink-0 whitespace-nowrap border-l border-[#e8e8e8] pl-[4px] leading-[20px]">{r[1]}</div>
          <div className="h-full w-[58px] shrink-0 border-l border-[#e8e8e8] pl-[4px] leading-[20px]">{r[2]}</div>
          <div className="flex h-full w-[24px] shrink-0 items-center justify-center border-l border-[#e8e8e8]">
            <Pmi />
          </div>
          <div className="flex h-full w-[24px] shrink-0 items-center justify-center border-l border-[#e8e8e8]">{eyeCross}</div>
          <div className="flex h-full flex-1 items-center justify-center border-l border-[#e8e8e8]">{r[3] && <Annot />}</div>
        </div>
      ))}
    </div>
    <div className="flex flex-1 flex-col items-center justify-center gap-[1px] pb-[4px] pl-[2px] text-[7px] leading-[7px] text-[#888]">
      <span>►</span>
      <span>►</span>
      <span>►</span>
    </div>
  </div>
);

const Csys = () => (
  <svg width="150" height="120" viewBox="0 0 450 360" className="absolute left-[0px] top-[625px]">
    <path d="M315 128 L410 207 L298 343 L200 265 Z M258 195 L355 275" fill="none" stroke="#bcbcbc" strokeWidth="3" />
    <path d="M258 195 L170 122" stroke="#3f9a3c" strokeWidth="10" />
    <polygon points="138,95 192,125 170,145" fill="#3f9a3c" />
    <path d="M335 200 L375 155" stroke="#1c35a8" strokeWidth="14" strokeLinecap="round" />
    <polygon points="405,118 395,160 362,135" fill="#1c35a8" />
    <text x="104" y="90" fontSize="32" fill="#3f9a3c" fontFamily="Liberation Sans">Y</text>
    <text x="406" y="112" fontSize="32" fill="#a83aa0" fontFamily="Liberation Sans">X</text>
  </svg>
);

const Viewport = () => (
  <div className="relative min-h-0 flex-1 bg-white">
    <div className="absolute left-[492px] top-[5px] flex h-[32px] w-[558px] items-center border-b border-[#e8e8e8] pl-[13px]">
      <Combo w="w-[155px]" text="单个面" />
      <div className="ml-[8px]">
        <Combo w="w-[157px]" text="单条曲线" />
      </div>
      <div className="ml-[9px]">
        <Combo w="w-[156px]" text="单个体" />
      </div>
      <span className="ml-[12px] text-[16px] font-bold leading-none text-[#333]">···</span>
      <div className="ml-[20px] mt-[10px]">
        <Caret />
      </div>
    </div>
    <Model />
    <ResultPanel />
    <Csys />
  </div>
);

const Radio = ({ label, on, focus }: { label: string; on?: boolean; focus?: boolean }) => (
  <div className="flex items-center gap-[5px] text-[12px] text-[#333]">
    <span className="flex h-[13px] w-[13px] items-center justify-center rounded-full border border-[#444] bg-white">{on && <span className="h-[7px] w-[7px] rounded-full bg-[#333]" />}</span>
    <span className={focus ? "outline-1 outline-dotted outline-[#222]" : ""}>{label}</span>
  </div>
);

const SecHead = ({ title, open = true, h = "h-[26px]" }: { title: string; open?: boolean; h?: string }) => (
  <div className={`flex ${h} items-center gap-[8px] pl-[8px] text-[13.5px] text-[#1d7d9c]`}>
    <Tri open={open} />
    <span>{title}</span>
  </div>
);

const SideBtn = ({ children }: { children: React.ReactNode }) => (
  <div className="flex h-[23px] w-[24px] items-center justify-center border border-[#c9c9c9] bg-[#f2f2f2]">
    <svg width="16" height="16" viewBox="0 0 16 16" fill="none" stroke="#999">
      {children}
    </svg>
  </div>
);

const Method = ({ on, children }: { on?: boolean; children: React.ReactNode }) => (
  <div className={`flex h-[32px] w-[32px] items-center justify-center ${on ? "bg-[#87bfcf]" : ""}`}>
    <svg width="26" height="26" viewBox="0 0 26 26" fill="none" strokeWidth="1.200">
      {children}
    </svg>
  </div>
);

const Filter = ({ on = true, children }: { on?: boolean; children: React.ReactNode }) => (
  <div className={`flex h-[32px] w-[32px] items-center justify-center ${on ? "bg-[#fdd96f]" : "border border-[#777] bg-white"}`}>{children}</div>
);

const Dialog = () => (
  <div className="absolute left-[1220px] top-[158px] flex h-[717px] w-[326px] flex-col border-x border-b border-[#dcdcdc] bg-[#f0f0f0]">
    <div className="flex h-[24px] shrink-0 items-center bg-[#05628a] pl-[6px] pr-[5px] text-white">
      <Settings size={15} strokeWidth={3} />
      <span className="ml-[7px] flex-1 text-[14px]">测量</span>
      <RotateCw size={14} strokeWidth={2.5} />
      <span className="ml-[8px] text-[15px] font-bold leading-none">?</span>
      <X size={17} strokeWidth={2.5} className="ml-[8px]" />
    </div>
    <div className="mx-[4px] mt-[4px] h-[361px] bg-white px-[10px]">
      <div className="-mx-[10px]">
        <SecHead title="要测量的对象" h="h-[31px]" />
      </div>
      <div className="grid h-[54px] grid-cols-[68px_68px_1fr] content-center gap-y-[6px] bg-[#eeeeee] pl-[6px]">
        <Radio label="对象" on focus />
        <Radio label="点" />
        <Radio label="矢量" />
        <Radio label="对象集" />
        <Radio label="点集" />
        <Radio label="坐标系" />
      </div>
      <div className="mt-[1px] flex h-[33px] gap-[2px]">
        <div className="flex flex-1 items-center bg-[#fdd96f] text-[12px] text-[#333]">选择对象 (0)</div>
        <div className="flex w-[31px] items-center justify-center bg-[#fdd96f]">
          <svg width="22" height="22" viewBox="0 0 22 22" fill="none" stroke="#333">
            <circle cx="11" cy="11" r="6" />
            <path d="M11 1v20M1 11h20" />
          </svg>
        </div>
      </div>
      <div className="mt-[3px] h-[167px] bg-[#eeeeee] px-[10px]">
        <div className="mb-[9px] flex h-[20px] items-center gap-[7px] pl-[1px] text-[12px] text-[#1d7d9c]">
          <Tri />
          <span>列表</span>
        </div>
        <div className="flex gap-[3px]">
          <div className="relative h-[130px] w-[252px] shrink-0 border border-[#cfcfcf] bg-white text-[12px] text-[#333]">
            <div className="flex h-[21px] items-center">
              <div className="w-[149px] pl-[23px]">对象 1</div>
              <div className="h-full flex-1 overflow-hidden whitespace-nowrap border-l border-[#e5e5e5] pl-[5px] leading-[21px]">(1) Bodies in Grc</div>
            </div>
            <div className="ml-[20px] flex h-[19px] items-center bg-[#87bfcf]">
              <div className="w-[129px] pl-[3px]">选择对象</div>
              <div className="h-full flex-1 border-l border-[#d8e8ee]" />
            </div>
            {[0, 1, 2].map((i) => (
              <div key={i} className={`flex h-[20px] border-b border-[#e8e8e8] ${i === 1 ? "bg-[#f8f8f8]" : ""}`}>
                <div className="w-[149px]" />
                <div className="flex-1 border-l border-[#e5e5e5]" />
              </div>
            ))}
            <div className="absolute left-[10px] top-[11px] h-[20px] w-[9px] border-y border-l border-dotted border-[#888]" />
            <div className="absolute inset-x-0 bottom-0 flex h-[18px] items-center bg-[#f0f0f0]">
              <ChevronLeft size={12} strokeWidth={3} className="ml-[3px] w-[15px] text-[#444]" />
              <div className="h-[15px] w-[152px] bg-[#c6c6c6]" />
              <div className="flex-1" />
              <ChevronRight size={12} strokeWidth={3} className="mr-[3px] text-[#444]" />
            </div>
          </div>
          <div className="flex shrink-0 flex-col gap-[3px]">
            <SideBtn>
              <path d="M2 2l12 12M14 2L2 14" />
            </SideBtn>
            <SideBtn>
              <path d="M2 2h12M8 4l5 5h-3v5H6V9H3z" />
            </SideBtn>
            <SideBtn>
              <path d="M8 2l5 6h-3v6H6V8H3z" />
            </SideBtn>
            <SideBtn>
              <path d="M8 14l5-6h-3V2H6v6H3z" />
            </SideBtn>
            <SideBtn>
              <path d="M2 14h12M8 12l5-5h-3V2H6v5H3z" />
            </SideBtn>
          </div>
        </div>
      </div>
      <div className="mt-[3px] h-[60px] bg-[#eeeeee] pl-[5px]">
        <div className="flex h-[24px] items-center pl-[4px] text-[12px] text-[#1d7d9c]">测量方法</div>
        <div className="flex gap-[2px]">
          <Method on>
            <path d="M2 12V2M24 12V2M2 4h22" stroke="#d98a3a" />
            <path d="M2 14v10M24 14v10M2 14h22" stroke="#1d8db0" />
          </Method>
          <Method>
            <path d="M2 12V2M9 12V2M2 6h7M16 12V2M24 12V2M16 6h8" stroke="#d98a3a" />
            <path d="M2 24V14h7v10M16 24V14h8v10" stroke="#1d8db0" />
          </Method>
          <Method>
            <path d="M3 12V2h20v10M10 2v10M16 2v10" stroke="#d98a3a" />
            <path d="M3 24V16h7v-3h6v3h7v8" stroke="#1d8db0" />
          </Method>
          <Method>
            <path d="M3 12V2h20v6H13v6" stroke="#d98a3a" />
            <path d="M3 24v-4h8v-5h12v9" stroke="#1d8db0" />
          </Method>
        </div>
      </div>
    </div>
    <div className="mx-[4px] mt-[3px] h-[94px] bg-white px-[10px]">
      <div className="-mx-[10px]">
        <SecHead title="结果过滤器" h="h-[28px]" />
      </div>
      <div className="flex h-[26px] items-center text-[12px] text-[#333]">显示 1 个测量，共 2 个</div>
      <div className="flex gap-[2px]">
        <Filter>
          <svg width="28" height="28" viewBox="0 0 28 28" fill="none">
            <path d="M3 21L25 7" stroke="#3a8f55" />
            <path d="M7 14l6 9M11 11l6 9M15 8l6 9" stroke="#d9651a" />
            <circle cx="8" cy="20" r="2.500" fill="#e88a1e" />
            <circle cx="20" cy="8" r="2.500" fill="#e88a1e" />
          </svg>
        </Filter>
        <Filter>
          <svg width="28" height="28" viewBox="0 0 28 28" fill="none">
            <path d="M5 26Q5 10 14 10T23 26" stroke="#3a8f55" />
            <path d="M4 8Q14 14 24 8M4 5v7M24 5v7" stroke="#d9651a" />
          </svg>
        </Filter>
        <Filter>
          <svg width="28" height="28" viewBox="0 0 28 28" fill="none">
            <path d="M6 3V25L24 10" stroke="#3a8f55" />
            <path d="M6 10Q16 9 19 14" stroke="#d9651a" />
          </svg>
        </Filter>
        <Filter>
          <Iso t="#f28c1e" l="#c4c4c4" r="#eee" s={26} />
        </Filter>
        <Filter>
          <Iso t="#f7a340" l="#e8821a" r="#d9740f" s={26} />
        </Filter>
        <Filter on={false}>
          <svg width="28" height="28" viewBox="0 0 28 28" fill="none">
            <path d="M2 8h16M4 12h14M6 16h12M10 3l3 16M14 3l3 16" stroke="#d9651a" />
            <polygon points="14,24 25,12 28,15 17,27" fill="#eee" stroke="#333" />
          </svg>
        </Filter>
        <Filter on={false}>
          <svg width="28" height="28" viewBox="0 0 28 28" fill="none" stroke="#333">
            <rect x="3" y="2" width="15" height="5" fill="#ddd" />
            <rect x="3" y="8" width="15" height="5" fill="#ddd" />
            <rect x="3" y="14" width="15" height="5" fill="#ddd" />
            <circle cx="20" cy="20" r="6" fill="#fff" />
            <path d="M20 16v8M16 20h8" />
          </svg>
        </Filter>
      </div>
    </div>
    <div className="mx-[4px] mt-[3px] h-[139px] bg-white px-[10px]">
      <div className="-mx-[10px]">
        <SecHead title="提示" h="h-[31px]" />
      </div>
      <div className="h-[100px] border border-[#555] bg-white px-[8px] pt-[8px] text-[12px] leading-[17px] text-[#333]">对于厚度，使用点选项在选定的体上选择或定义“面上的点”。</div>
    </div>
    <div className="mx-[4px] mt-[4px] h-[23px] bg-white">
      <SecHead title="设置" open={false} h="h-[24px]" />
    </div>
    <div className="mx-[4px] flex h-[17px] items-center justify-center border-b border-[#d4d4d4]">
      <svg width="10" height="6" viewBox="0 0 10 6">
        <polygon points="0,6 10,6 5,0" fill="#222" />
      </svg>
    </div>
    <div className="flex flex-1 items-start justify-end gap-[5px] pr-[13px] pt-[9px] text-[12px]">
      <div className="flex h-[24px] w-[54px] items-center justify-center border border-[#05628a] bg-[#f4f8fa] text-[#1d6a8a]">确定</div>
      <div className="flex h-[24px] w-[54px] items-center justify-center bg-[#05628a] text-white">应用</div>
      <div className="flex h-[24px] w-[54px] items-center justify-center border border-[#05628a] bg-[#f4f8fa] text-[#1d6a8a]">取消</div>
    </div>
  </div>
);

const Eye = ({ off }: { off?: boolean }) => (
  <svg width="17" height="15" viewBox="0 0 16 14" className="shrink-0">
    <path d="M0.500 7 Q8 -1 15.500 7 Q8 14 0.500 7Z" fill="#ddd" stroke="#555" />
    <circle cx="8" cy="6.500" r="4" fill="#3a3a3a" />
    {off && <path d="M2 13L14 1" stroke="#222" strokeWidth="1.200" />}
  </svg>
);

const Check = () => (
  <svg width="15" height="14" viewBox="0 0 15 14">
    <path d="M1 7l4.500 5L14 1" fill="none" stroke="#35b14a" strokeWidth="2" />
  </svg>
);

type NavRow = { text: string; kind: "root" | "child"; icon?: React.ReactNode; pre?: React.ReactNode; gray?: boolean; bold?: boolean; check?: boolean; eye?: "on" | "off" | "info"; cur?: boolean };

const sk = <Sketch s={16} />;
const ex = <Extrude s={16} />;

const navRows: NavRow[] = [
  { text: "历史记录建模模式", kind: "root", pre: <span className="w-[11px]" />, icon: (
    <svg width="16" height="16" viewBox="0 0 16 16" fill="none" stroke="#333"><circle cx="8" cy="8" r="7" /><path d="M8 3v5H4" /></svg>
  ) },
  { text: "模型视图", kind: "root", pre: <Pm t="+" />, icon: (
    <svg width="16" height="16" viewBox="0 0 16 16" fill="none" stroke="#333"><rect x="1" y="2" width="14" height="13" fill="#fff" /><path d="M1 4h14" /><ellipse cx="8" cy="10" rx="3.500" ry="3" fill="#888" /></svg>
  ) },
  { text: "摄像机", kind: "root", pre: <><Pm t="+" /><Check /></>, icon: (
    <svg width="16" height="16" viewBox="0 0 16 16"><polygon points="1,10 9,2 15,6 15,13 7,15" fill="#f6d9a8" stroke="#b3762a" /><circle cx="10" cy="8" r="2.500" fill="#e88a1e" /></svg>
  ) },
  { text: "模型历史记录", kind: "root", check: true, pre: <><Pm t="−" /><span className="h-[14px] w-[14px] rounded-full border border-[#2d7d2d] bg-[radial-gradient(circle_at_35%_30%,#c9f5b8,#2fb32f_60%,#137a13)]" /></>, icon: (
    <svg width="16" height="16" viewBox="0 0 16 16"><rect x="1" y="1" width="14" height="14" fill="#fff" stroke="#555" /><rect x="6" y="6" width="7" height="7" fill="#e88a1e" /><rect x="3" y="3" width="6" height="6" fill="#f8d9a8" stroke="#c97014" /></svg>
  ) },
  { text: "基准坐标系 (0)", kind: "child", eye: "on", check: true, icon: (
    <svg width="16" height="16" viewBox="0 0 16 16" fill="none" stroke="#d9558f"><path d="M8 1v8M8 9l-6 5M8 9l6 5" /><circle cx="8" cy="9" r="3" /><path d="M2 14h12" /></svg>
  ) },
  { text: "草图 (1) \"SKETCH_0...", kind: "child", eye: "off", gray: true, check: true, icon: sk },
  { text: "拉伸 (2)", kind: "child", eye: "on", check: true, icon: ex },
  { text: "拉伸 (3)", kind: "child", eye: "on", check: true, icon: ex },
  { text: "拉伸 (4)", kind: "child", eye: "on", check: true, icon: ex },
  { text: "合并 (5)", kind: "child", eye: "on", check: true, icon: <Unite s={16} /> },
  { text: "边倒圆 (6)", kind: "child", eye: "on", check: true, icon: <OrangeCube s={16} /> },
  { text: "草图 (7) \"SKETCH_0...", kind: "child", eye: "off", gray: true, check: true, icon: sk },
  { text: "旋转 (8)", kind: "child", eye: "on", check: true, icon: <Revolve s={16} /> },
  { text: "拉伸 (9)", kind: "child", eye: "on", check: true, icon: ex },
  { text: "拉伸 (10)", kind: "child", eye: "info", check: true, icon: ex },
  { text: "倒斜角 (11)", kind: "child", eye: "on", check: true, icon: <Iso t="#e8e8e8" l="#c4c4c4" r="#f28c1e" s={16} /> },
  { text: "替换面 (12)", kind: "child", eye: "on", bold: true, check: true, cur: true, icon: <OrangeCube s={16}><path d="M8 24l10-7v4h10v5H14v4z" fill="#fff" stroke="#222" strokeWidth="2" /></OrangeCube> },
];

function Pm({ t }: { t: string }) {
  return <span className="relative z-10 flex h-[9px] w-[9px] shrink-0 items-center justify-center border border-[#bbb] bg-white text-[9px] leading-none text-[#333]">{t}</span>;
}

const NavLine = ({ r, i }: { r: NavRow; i: number }) => (
  <div className={`relative flex h-[20px] border-b border-[#eeeeee] text-[12px] ${i % 2 ? "bg-[#fafafa]" : "bg-white"}`}>
    {i < 3 && <div className="absolute bottom-[-10px] left-[11px] top-[10px] border-l border-dotted border-[#888]" />}
    {i === 0 && <div className="absolute left-[11px] top-[10px] w-[7px] border-t border-dotted border-[#888]" />}
    <div className="flex w-[200px] shrink-0 items-center overflow-hidden">
      {r.kind === "root" ? (
        <div className="flex items-center gap-[2px] pl-[7px]">
          {r.pre}
          {r.icon}
        </div>
      ) : (
        <div className="flex items-center pl-[38px]">
          {r.eye === "info" ? (
            <span className="flex h-[15px] w-[17px] shrink-0 items-center justify-center rounded-full bg-[#2a6a9a] text-[10px] font-bold leading-none text-white">i</span>
          ) : (
            <Eye off={r.eye === "off"} />
          )}
          {r.icon}
        </div>
      )}
      <span className={`ml-[3px] whitespace-nowrap ${r.gray ? "text-[#aaa]" : "text-[#333]"} ${r.bold ? "font-bold" : ""}`}>{r.text}</span>
    </div>
    <div className="flex w-[24px] shrink-0 items-center justify-center border-l border-[#e6e6e6]">
      {r.cur && (
        <svg width="9" height="14" viewBox="0 0 9 14" fill="none" stroke="#555">
          <rect x="0.500" y="1" width="3" height="3" />
          <rect x="5" y="1" width="3" height="3" fill="#e88a1e" />
          <rect x="5" y="6" width="3" height="3" fill="#e88a1e" />
          <rect x="5" y="10" width="3" height="3" />
        </svg>
      )}
    </div>
    <div className="flex w-[24px] shrink-0 items-center justify-center border-l border-[#e6e6e6]">{r.check && <Check />}</div>
    <div className="flex-1 border-l border-[#e6e6e6]" />
    {r.kind === "child" && <div className="absolute left-[29px] top-[10px] w-[9px] border-t border-dotted border-[#888]" />}
    {r.kind === "child" && <div className={`absolute left-[29px] top-[-10px] border-l border-dotted border-[#888] ${i < 16 ? "bottom-[-11px]" : "bottom-[9px]"}`} />}
  </div>
);

const Navigator = () => (
  <div className="flex w-[335px] shrink-0 flex-col border-l border-t border-[#b5b5b5] bg-white">
    <div className="flex h-[28px] shrink-0 items-center pl-[13px]">
      <svg width="13" height="12" viewBox="0 0 13 12">
        <path d="M.5.500h12v11H.5z" fill="#fff" stroke="#222" />
        <path d="M0 1.500h13" stroke="#222" strokeWidth="2" />
      </svg>
      <span className="ml-[10px] text-[12px] text-[#333]">部件导航器</span>
    </div>
    <div className="ml-[10px] mr-[6px] flex min-h-0 flex-1 flex-col">
      <div className="flex min-h-0 flex-1 flex-col overflow-hidden border-x border-t border-[#d4d4d4]">
        <div className="flex h-[21px] shrink-0 items-center bg-[#f2f2f2] text-[12px] text-[#333]">
          <div className="flex w-[200px] items-center gap-[14px] pl-[7px]">
            名称
            <svg width="9" height="5" viewBox="0 0 9 5">
              <polygon points="0,5 9,5 4.500,0" fill="#222" />
            </svg>
          </div>
          <div className="h-full w-[24px] border-l border-[#dcdcdc] text-center leading-[22px]">当</div>
          <div className="h-full w-[24px] border-l border-[#dcdcdc] text-center leading-[22px]">最</div>
          <div className="h-full flex-1 border-l border-[#dcdcdc] pl-[6px] leading-[22px]">附注</div>
        </div>
        <div className="min-h-0 flex-1 overflow-hidden">
          {navRows.map((r, i) => (
            <NavLine key={r.text + i} r={r} i={i} />
          ))}
          {Array.from({ length: 17 }).map((_, i) => (
            <div key={i} className="flex h-[20px] border-b border-[#f0f0f0]">
              <div className="w-[200px]" />
              <div className="w-[24px] border-l border-[#e6e6e6]" />
              <div className="w-[24px] border-l border-[#e6e6e6]" />
              <div className="flex-1 border-l border-[#e6e6e6]" />
            </div>
          ))}
        </div>
        <div className="flex h-[17px] shrink-0 items-center bg-[#f0f0f0]">
          <ChevronLeft size={12} strokeWidth={3} className="ml-[3px] w-[15px] text-[#444]" />
          <div className="h-[15px] w-[254px] bg-[#c6c6c6]" />
          <div className="flex-1" />
          <ChevronRight size={12} strokeWidth={3} className="mr-[3px] text-[#444]" />
        </div>
      </div>
      <div className="h-[5px] shrink-0 border-y border-[#999] bg-[#d8d8d8]" />
      {["搜索", "相关性", "细节", "预览"].map((t, i) => (
        <div key={t} className={`flex h-[24px] shrink-0 items-center gap-[10px] border-b-2 border-[#d0d0d0] pl-[9px] text-[13.5px] text-[#1d7d9c] ${i === 0 ? "mt-[3px]" : ""}`}>
          <Tri open={false} />
          {t}
        </div>
      ))}
      <div className="h-[4px] shrink-0" />
    </div>
  </div>
);

const RailItem = ({ children, on, h = "h-[28px]", mt }: { children: React.ReactNode; on?: boolean; h?: string; mt: string }) => (
  <div className={`${h} ${mt} flex shrink-0 items-center pl-[2px] ${on ? "-ml-px border-y border-[#aaa] bg-white" : ""}`}>{children}</div>
);

const Rail = () => (
  <div className="flex w-[22px] shrink-0 flex-col overflow-hidden border-l border-[#b5b5b5] bg-[#dcdcdc]">
    <RailItem h="h-[26px]" mt="mt-0">
      <Settings size={15} strokeWidth={2.2} className="ml-[3px] text-[#444]" />
    </RailItem>
    <RailItem mt="mt-[21px]">
      <Svg s={26}>
        <path d="M3 10L14 4l10 5v6l-8 4v8l-6 3-7-4z" fill="#eee" stroke="#555" strokeWidth="1.500" />
      </Svg>
    </RailItem>
    <RailItem mt="mt-[15px]">
      <OrangeCube s={28} />
    </RailItem>
    <RailItem on h="h-[44px]" mt="mt-[7px]">
      <Bracket s={28} />
    </RailItem>
    <RailItem mt="mt-[5px]">
      <Svg s={28}>
        <path d="M4 8l8-4v22l-8-1zM12 4l6 3v20l-6-1M18 7l10 3v18l-10-1" fill="#eee" stroke="#555" />
      </Svg>
    </RailItem>
    <RailItem mt="mt-[17px]">
      <Bracket s={28} />
    </RailItem>
    <RailItem mt="mt-[13px]">
      <Svg s={28}>
        <path d="M2 17L12 7l14 8-10 10z" fill="#eee" stroke="#555" />
        <path d="M2 8l12-5" stroke="#e88a1e" />
      </Svg>
    </RailItem>
    <RailItem mt="mt-[28px]">
      <div className="flex h-[20px] w-[20px] shrink-0 items-center justify-center rounded-full border border-[#555] bg-[#a0a0a0] text-[13px] font-bold leading-none text-white">i</div>
    </RailItem>
    <RailItem mt="mt-[23px]">
      <div className="flex h-[24px] w-[26px] shrink-0 items-center border border-[#555] bg-[#e8e8e8] pl-[3px] pt-[2px]">
        <span className="h-[14px] w-[14px] rounded-full bg-[#3a98c9]" />
      </div>
    </RailItem>
    <RailItem mt="mt-[26px]">
      <svg width="24" height="24" viewBox="0 0 24 24" fill="none" stroke="#333" className="shrink-0">
        <circle cx="12" cy="12" r="11" />
        <path d="M12 5v7H5" />
      </svg>
    </RailItem>
    <RailItem mt="mt-[13px]">
      <Svg s={26}>
        <defs>
          <linearGradient id="gBar" x1="0" y1="0" x2="0" y2="1">
            <stop offset="0" stopColor="#d9342a" />
            <stop offset="0.3" stopColor="#e8e81e" />
            <stop offset="0.65" stopColor="#35c14a" />
            <stop offset="1" stopColor="#2a50d8" />
          </linearGradient>
        </defs>
        <rect x="2" y="1" width="9" height="30" fill="url(#gBar)" />
        <path d="M13 14L24 31" stroke="#111" strokeWidth="3" />
      </Svg>
    </RailItem>
    <RailItem mt="mt-[13px]">
      <Svg s={26}>
        <path d="M6 4v20l8-2" stroke="#3a8fd8" strokeWidth="5" fill="none" />
        <path d="M12 8L24 28" stroke="#111" strokeWidth="3" />
      </Svg>
    </RailItem>
    <RailItem mt="mt-[11px]">
      <svg width="26" height="30" viewBox="0 0 26 30" fill="none" stroke="#333" className="shrink-0">
        <path d="M1 3h9l3 3h13v24H1z" fill="#eee" />
        <path d="M5 10l15 15M20 10L5 25" strokeWidth="2.500" />
      </svg>
    </RailItem>
  </div>
);

const StatusBar = () => (
  <div className="flex h-[23px] shrink-0 items-center justify-between border-b-2 border-t border-b-[#0a4a6a] border-t-[#b0b0b0] bg-white pr-[3px]">
    <span className="text-[11px] font-medium text-[#222]">选择要测量的对象。要取消选择，使用对象手柄的右键菜单中或列表中的“移除”。</span>
    <span className="font-['Liberation_Mono','Noto_Sans_CJK_SC',monospace] text-[14px] tracking-[0.35px] text-[#666]">UG爱好者论坛@18639046007</span>
  </div>
);

export default function App() {
  return (
    <div className={`relative flex h-[1041px] w-[1905px] flex-col overflow-hidden bg-white ${FONT}`}>
      <Header />
      <Ribbon />
      <Toolbar />
      <div className="flex min-h-0 flex-1">
        <div className="flex min-w-0 flex-1 flex-col">
          <div className="h-[27px] shrink-0 border-b-[3px] border-[#05628a]">
            <div className="flex h-[24px] w-[197px] items-center bg-[#05628a] pl-[2px] text-[12px] text-white">
              <Bracket s={14} />
              <span className="ml-[4px] whitespace-nowrap">catics第6届3D大赛第7题.prt</span>
              <X size={12} strokeWidth={2.5} className="ml-[6px] text-[#c8dce6]" />
            </div>
          </div>
          <Viewport />
        </div>
        <Navigator />
        <Rail />
      </div>
      <StatusBar />
      <Dialog />
    </div>
  );
}
